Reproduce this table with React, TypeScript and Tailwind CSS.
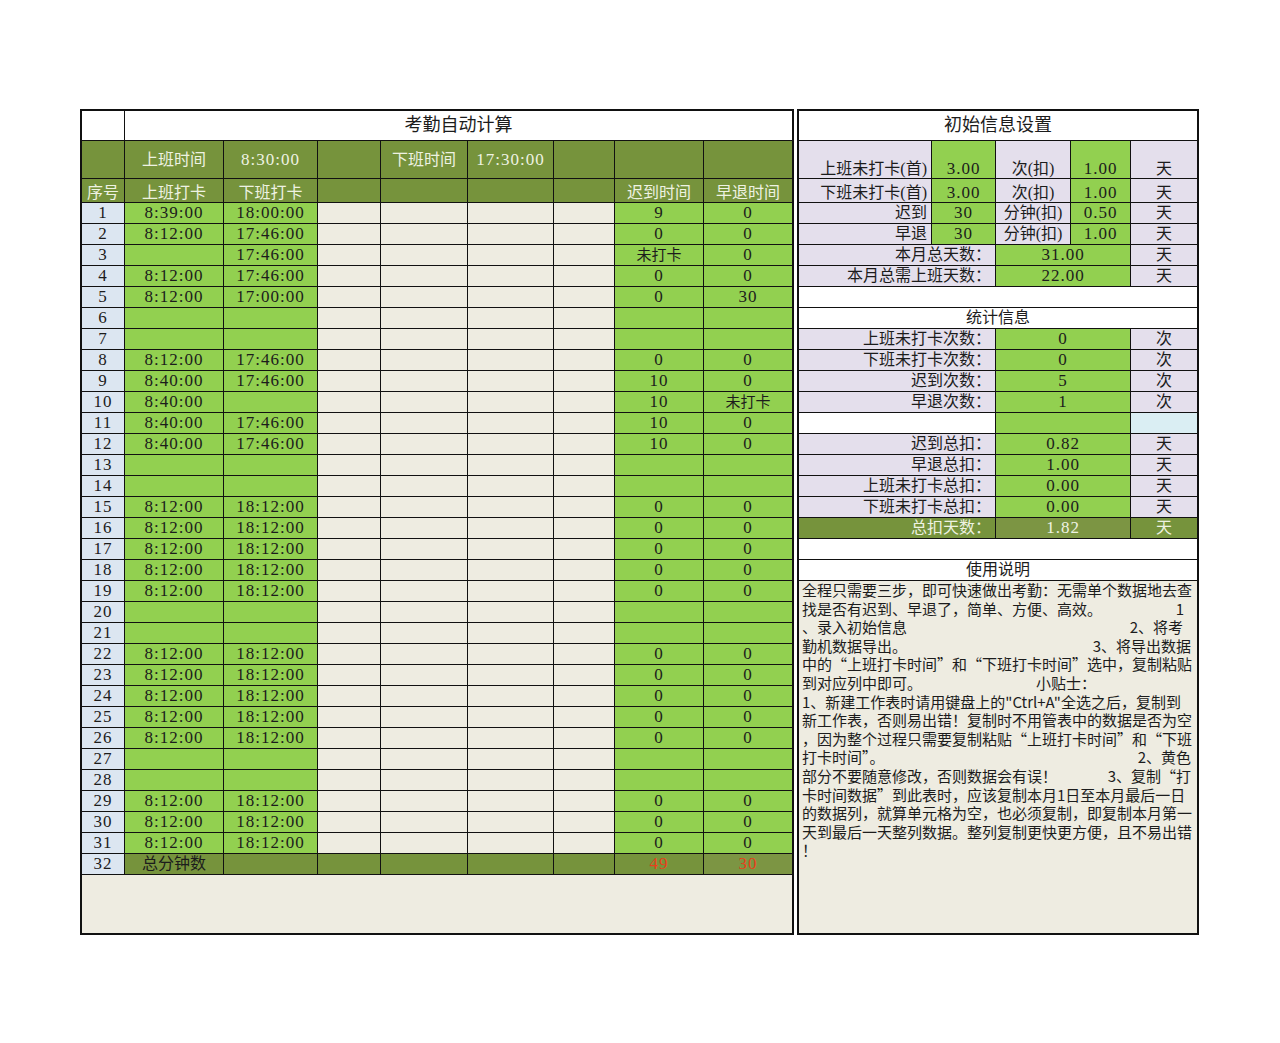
import React from "react";

const OL = "bg-[#76933C] text-[#EEF2E2]";
const OLD = "bg-[#76933C] text-[#1c1c1c]";
const GR = "bg-[#92D050] text-[#1c1c1c]";
const BE = "bg-[#EEECE1]";
const LB = "bg-[#DCE6F1] text-[#1c1c1c]";
const LV = "bg-[#E4DFEC] text-[#1c1c1c]";
const WH = "bg-white text-[#1c1c1c]";

type CP = { className?: string; al?: string; children?: React.ReactNode };
function Cell({ className = "", al = "items-center justify-center", children }: CP) {
  return (
    <div className={`flex overflow-hidden whitespace-nowrap ${al} ${className}`}>{children}</div>
  );
}

const N = ({ children }: { children: React.ReactNode }) => (
  <span className="text-[17px] tracking-[1px]">{children}</span>
);

const F = "8:12:00";
type Row = [string, string, string, string] | null;
const rows: Row[] = [
  ["8:39:00", "18:00:00", "9", "0"],
  [F, "17:46:00", "0", "0"],
  ["", "17:46:00", "未打卡", "0"],
  [F, "17:46:00", "0", "0"],
  [F, "17:00:00", "0", "30"],
  null,
  null,
  [F, "17:46:00", "0", "0"],
  ["8:40:00", "17:46:00", "10", "0"],
  ["8:40:00", "", "10", "未打卡"],
  ["8:40:00", "17:46:00", "10", "0"],
  ["8:40:00", "17:46:00", "10", "0"],
  null,
  null,
  [F, "18:12:00", "0", "0"],
  [F, "18:12:00", "0", "0"],
  [F, "18:12:00", "0", "0"],
  [F, "18:12:00", "0", "0"],
  [F, "18:12:00", "0", "0"],
  null,
  null,
  [F, "18:12:00", "0", "0"],
  [F, "18:12:00", "0", "0"],
  [F, "18:12:00", "0", "0"],
  [F, "18:12:00", "0", "0"],
  [F, "18:12:00", "0", "0"],
  null,
  null,
  [F, "18:12:00", "0", "0"],
  [F, "18:12:00", "0", "0"],
  [F, "18:12:00", "0", "0"],
];

const HB = "items-end justify-center leading-[18px]";

function V({ v }: { v: string }) {
  if (v === "未打卡") return <span className="text-[15px]">{v}</span>;
  return <N>{v}</N>;
}

function LeftTable() {
  return (
    <div className="w-[714px] border-2 border-[#111] bg-[#111]">
      <div className="grid grid-cols-[42px_98px_93px_62px_86px_85px_60px_88px_88px] grid-rows-[29px_37px_23px_repeat(32,20px)_58px] gap-px text-[16px]">
        {/* title */}
        <Cell className={WH} />
        <Cell className={`${WH} col-span-8 text-[18px]`}>考勤自动计算</Cell>
        {/* row 2 */}
        <Cell className={OL} />
        <Cell className={OL}>上班时间</Cell>
        <Cell className={OL}><N>8:30:00</N></Cell>
        <Cell className={OL} />
        <Cell className={OL}>下班时间</Cell>
        <Cell className={OL}><N>17:30:00</N></Cell>
        <Cell className={OL} />
        <Cell className={OL} />
        <Cell className={OL} />
        {/* row 3 */}
        <Cell className={OL} al={HB}>序号</Cell>
        <Cell className={OL} al={HB}>上班打卡</Cell>
        <Cell className={OL} al={HB}>下班打卡</Cell>
        <Cell className={OL} />
        <Cell className={OL} />
        <Cell className={OL} />
        <Cell className={OL} />
        <Cell className={OL} al={HB}>迟到时间</Cell>
        <Cell className={OL} al={HB}>早退时间</Cell>
        {/* data */}
        {rows.map((r, i) => (
          <React.Fragment key={i}>
            <Cell className={LB}><N>{i + 1}</N></Cell>
            <Cell className={GR}>{r ? <V v={r[0]} /> : null}</Cell>
            <Cell className={GR}>{r ? <V v={r[1]} /> : null}</Cell>
            <Cell className={BE} />
            <Cell className={BE} />
            <Cell className={BE} />
            <Cell className={BE} />
            <Cell className={GR}>{r ? <V v={r[2]} /> : null}</Cell>
            <Cell className={GR}>{r ? <V v={r[3]} /> : null}</Cell>
          </React.Fragment>
        ))}
        {/* row 32 */}
        <Cell className={LB}><N>32</N></Cell>
        <Cell className={OLD}>总分钟数</Cell>
        <Cell className={OLD} />
        <Cell className={OLD} />
        <Cell className={OLD} />
        <Cell className={OLD} />
        <Cell className={OLD} />
        <Cell className="bg-[#76933C] text-[#E8401C]"><N>49</N></Cell>
        <Cell className="bg-[#7C9543] text-[#E8401C]"><N>30</N></Cell>
        {/* bottom */}
        <Cell className={`${BE} col-span-9`} />
      </div>
    </div>
  );
}

const R = "items-center justify-end pr-[4px]";
const RB = "items-end justify-end pr-[4px] leading-[18px]";
const CB = "items-end justify-center leading-[18px]";

function RightTable() {
  return (
    <div className="w-[402px] border-2 border-[#111] bg-[#111]">
      <div className="grid grid-cols-[132px_63px_74px_59px_66px] grid-rows-[29px_37px_23px_repeat(18,20px)_352px] gap-px text-[16px]">
        <Cell className={`${WH} col-span-5 text-[18px]`}>初始信息设置</Cell>

        <Cell className={LV} al={RB}>上班未打卡(首)</Cell>
        <Cell className={GR} al={CB}><N>3.00</N></Cell>
        <Cell className={LV} al={CB}>次(扣)</Cell>
        <Cell className={GR} al={CB}><N>1.00</N></Cell>
        <Cell className={LV} al={CB}>天</Cell>

        <Cell className={LV} al={RB}>下班未打卡(首)</Cell>
        <Cell className={GR} al={CB}><N>3.00</N></Cell>
        <Cell className={LV} al={CB}>次(扣)</Cell>
        <Cell className={GR} al={CB}><N>1.00</N></Cell>
        <Cell className={LV} al={CB}>天</Cell>

        <Cell className={LV} al={R}>迟到</Cell>
        <Cell className={GR}><N>30</N></Cell>
        <Cell className={LV}>分钟(扣)</Cell>
        <Cell className={GR}><N>0.50</N></Cell>
        <Cell className={LV}>天</Cell>

        <Cell className={LV} al={R}>早退</Cell>
        <Cell className={GR}><N>30</N></Cell>
        <Cell className={LV}>分钟(扣)</Cell>
        <Cell className={GR}><N>1.00</N></Cell>
        <Cell className={LV}>天</Cell>

        <Cell className={`${LV} col-span-2`} al={R}>本月总天数：</Cell>
        <Cell className={`${GR} col-span-2`}><N>31.00</N></Cell>
        <Cell className={LV}>天</Cell>

        <Cell className={`${LV} col-span-2`} al={R}>本月总需上班天数：</Cell>
        <Cell className={`${GR} col-span-2`}><N>22.00</N></Cell>
        <Cell className={LV}>天</Cell>

        <Cell className={`${WH} col-span-5`} />
        <Cell className={`${WH} col-span-5`}>统计信息</Cell>

        <Cell className={`${LV} col-span-2`} al={R}>上班未打卡次数：</Cell>
        <Cell className={`${GR} col-span-2`}><N>0</N></Cell>
        <Cell className={LV}>次</Cell>

        <Cell className={`${LV} col-span-2`} al={R}>下班未打卡次数：</Cell>
        <Cell className={`${GR} col-span-2`}><N>0</N></Cell>
        <Cell className={LV}>次</Cell>

        <Cell className={`${LV} col-span-2`} al={R}>迟到次数：</Cell>
        <Cell className={`${GR} col-span-2`}><N>5</N></Cell>
        <Cell className={LV}>次</Cell>

        <Cell className={`${LV} col-span-2`} al={R}>早退次数：</Cell>
        <Cell className={`${GR} col-span-2`}><N>1</N></Cell>
        <Cell className={LV}>次</Cell>

        <Cell className={`${WH} col-span-2`} />
        <Cell className={`${GR} col-span-2`} />
        <Cell className="bg-[#DAEEF3]" />

        <Cell className={`${LV} col-span-2`} al={R}>迟到总扣：</Cell>
        <Cell className={`${GR} col-span-2`}><N>0.82</N></Cell>
        <Cell className={LV}>天</Cell>

        <Cell className={`${LV} col-span-2`} al={R}>早退总扣：</Cell>
        <Cell className={`${GR} col-span-2`}><N>1.00</N></Cell>
        <Cell className={LV}>天</Cell>

        <Cell className={`${LV} col-span-2`} al={R}>上班未打卡总扣：</Cell>
        <Cell className={`${GR} col-span-2`}><N>0.00</N></Cell>
        <Cell className={LV}>天</Cell>

        <Cell className={`${LV} col-span-2`} al={R}>下班未打卡总扣：</Cell>
        <Cell className={`${GR} col-span-2`}><N>0.00</N></Cell>
        <Cell className={LV}>天</Cell>

        <Cell className={`${OL} col-span-2`} al={R}>总扣天数：</Cell>
        <Cell className="bg-[#7C9543] text-[#EEF2E2] col-span-2"><N>1.82</N></Cell>
        <Cell className={OL}>天</Cell>

        <Cell className={`${WH} col-span-5`} />
        <Cell className={`${WH} col-span-5`}>使用说明</Cell>

        <div className={`${BE} col-span-5 pl-[3px] pr-[6px] text-[15px] leading-[18.6px] text-[#1c1c1c] [font-family:'Noto_Sans_CJK_SC','Liberation_Serif',sans-serif]`}>
          <div className="whitespace-nowrap">全程只需要三步，即可快速做出考勤：无需单个数据地去查</div>
          <div className="flex justify-between whitespace-nowrap"><span>找是否有迟到、早退了，简单、方便、高效。</span><span className="mr-[7px]">1</span></div>
          <div className="flex justify-between whitespace-nowrap"><span>、录入初始信息</span><span className="mr-[8px]">2、将考</span></div>
          <div className="flex justify-between whitespace-nowrap"><span>勤机数据导出。</span><span>3、将导出数据</span></div>
          <div className="whitespace-nowrap">中的“上班打卡时间”和“下班打卡时间”选中，复制粘贴</div>
          <div className="flex whitespace-nowrap"><span>到对应列中即可。</span><span className="ml-[114px]">小贴士：</span></div>
          <div className="whitespace-nowrap">1、新建工作表时请用键盘上的"Ctrl+A"全选之后，复制到</div>
          <div className="whitespace-nowrap">新工作表，否则易出错！复制时不用管表中的数据是否为空</div>
          <div className="whitespace-nowrap">，因为整个过程只需要复制粘贴“上班打卡时间”和“下班</div>
          <div className="flex justify-between whitespace-nowrap"><span>打卡时间”。</span><span>2、黄色</span></div>
          <div className="flex justify-between whitespace-nowrap"><span>部分不要随意修改，否则数据会有误！</span><span>3、复制“打</span></div>
          <div className="whitespace-nowrap">卡时间数据”到此表时，应该复制本月1日至本月最后一日</div>
          <div className="whitespace-nowrap">的数据列，就算单元格为空，也必须复制，即复制本月第一</div>
          <div className="whitespace-nowrap">天到最后一天整列数据。整列复制更快更方便，且不易出错</div>
          <div className="whitespace-nowrap">！</div>
        </div>
      </div>
    </div>
  );
}

export default function App() {
  return (
    <div className="w-[1280px] min-h-[1043px] bg-white pt-[109px] pl-[80px] flex items-start gap-[3px] text-[#1c1c1c] [font-family:'Liberation_Serif','Noto_Sans_CJK_SC',serif]">
      <LeftTable />
      <RightTable />
    </div>
  );
}
